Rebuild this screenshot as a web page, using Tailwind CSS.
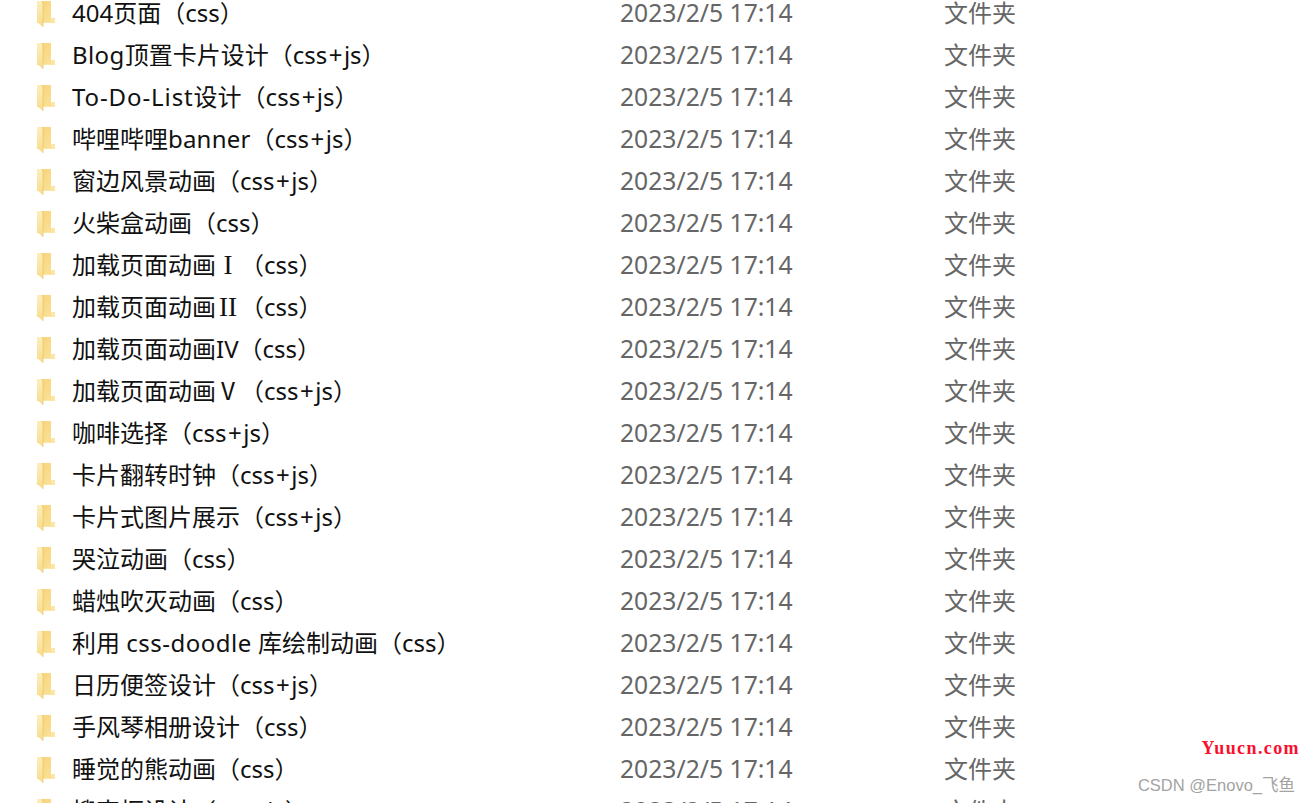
<!DOCTYPE html>
<html lang="en">
<head>
    <meta charset="UTF-8">
    <title>文件夹</title>
    <script src="https://cdn.jsdelivr.net/npm/@tailwindcss/browser@4"></script>
</head>
<body class="bg-white">
    <svg class="absolute w-0 h-0">
        <defs>
            <linearGradient id="back" x1="0" y1="0" x2="1" y2="1">
                <stop offset="0" stop-color="#f6d274"/>
                <stop offset="1" stop-color="#fbe39c"/>
            </linearGradient>
            <linearGradient id="front" x1="0" y1="0" x2="0" y2="1">
                <stop offset="0" stop-color="#fdeebb"/>
                <stop offset="1" stop-color="#f8dc8c"/>
            </linearGradient>
        </defs>
    </svg>

    <div class="relative w-[1311px] h-[803px] overflow-hidden font-['Noto_Sans','Noto_Sans_CJK_SC',sans-serif]">
        <!-- file rows -->
        <div id="rows" class="flex flex-col -mt-[8px]"></div>

        <!-- watermarks -->
        <div class="absolute right-[11px] top-[737px] font-['Liberation_Serif',serif] font-bold text-[18px] leading-[22px] tracking-[1.4px] text-[#fb0f2d]">Yuucn.com</div>
        <div class="absolute right-[16px] top-[774px] font-['Liberation_Sans','Noto_Sans_CJK_SC',sans-serif] text-[16.5px] leading-[22px] text-[#a3a3a3]">CSDN @Enovo_飞鱼</div>
    </div>

    <script>
        const serif = t => `<span class="inline-block w-[24px] text-center font-['Liberation_Serif',serif] text-[27px] leading-none">${t}</span>`;
        const names = [
            '404页面（css）',
            '<span class="tracking-[0.4px]">Blog</span>顶置卡片设计（css+js）',
            '<span class="tracking-[0.9px]">To-Do-List</span>设计（css+js）',
            '哔哩哔哩<span class="tracking-[0.2px]">banner</span>（css+js）',
            '窗边风景动画（css+js）', '火柴盒动画（css）', `加载页面动画${serif('I')}（css）`, `加载页面动画${serif('II')}（css）`,
            '加载页面动画IV（css）', '加载页面动画Ⅴ（css+js）', '咖啡选择（css+js）', '卡片翻转时钟（css+js）',
            '卡片式图片展示（css+js）', '哭泣动画（css）', '蜡烛吹灭动画（css）',
            '利用 <span class="tracking-[0.5px]">css-doodle</span> 库绘制动画（css）',
            '日历便签设计（css+js）', '手风琴相册设计（css）', '睡觉的熊动画（css）', '搜索框设计（css+js）'
        ];
        const folder = `<svg class="w-[20px] h-[27px] shrink-0 ml-[36px]" viewBox="0 0 20 27">
            <path d="M1 1h14v17h4v5H1z" fill="url(#back)"/>
            <path d="M15 18h4v5H7v-1h8z" fill="#fbe6a6"/>
            <path d="M1 1h5l1 3v23l-6-5z" fill="url(#front)"/>
            <path d="M6 1l1 3v23" fill="none" stroke="#e8c268" stroke-width=".7"/>
        </svg>`;
        // the plus sign sits wider in the original font
        const plus = '<span class="mx-[1.5px]">+</span>';
        document.getElementById('rows').innerHTML = names.map(name => `
            <div class="flex items-center h-[42px] text-[24px]">
                ${folder}
                <span class="w-[564px] pl-[16px] shrink-0 text-[#111111] whitespace-nowrap">${name.replace('css+js', 'css' + plus + 'js')}</span>
                <span class="w-[324px] shrink-0 text-[24.7px] text-[#666666] whitespace-nowrap">2023/2/5 17:14</span>
                <span class="text-[#666666]">文件夹</span>
            </div>`).join('');
    </script>
</body>
</html>
